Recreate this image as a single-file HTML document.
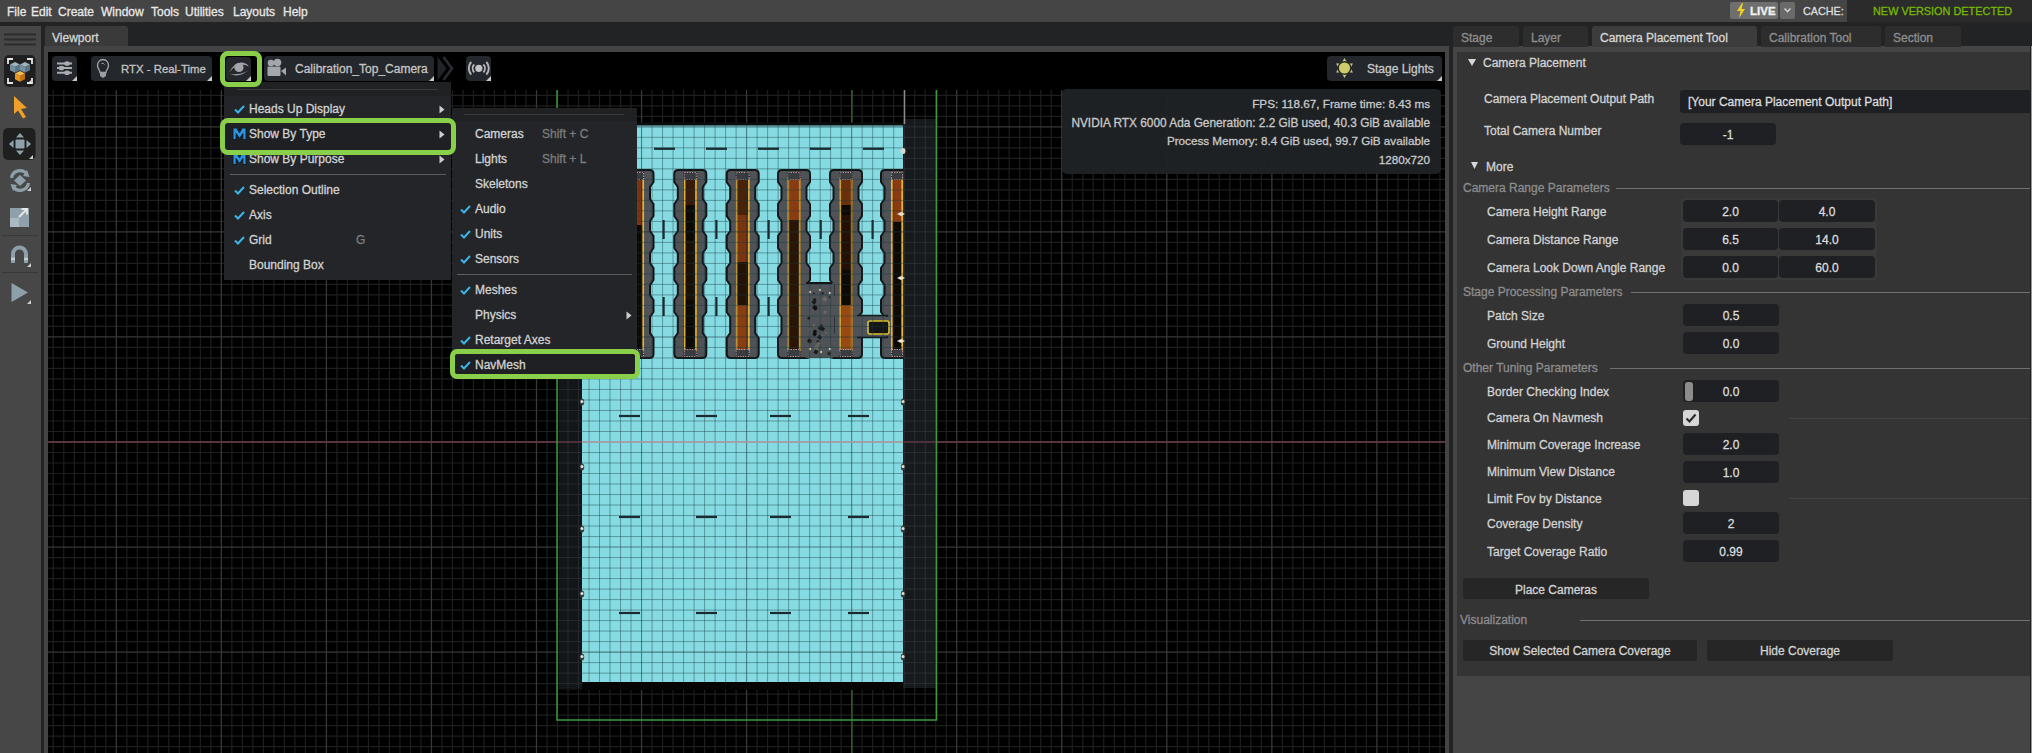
<!DOCTYPE html><html><head><meta charset="utf-8"><style>
*{margin:0;padding:0;box-sizing:border-box}
html,body{width:2032px;height:753px;overflow:hidden;background:#232323;font-family:"Liberation Sans",sans-serif;color:#d4d4d4}
.a{position:absolute}
.t{position:absolute;white-space:nowrap;line-height:12px;font-size:12px;-webkit-text-stroke-width:0.3px}
.lbl{color:#d2d2d2}
.hdr{color:#8c8c8c}
.fld{position:absolute;background:#1f2023;border-radius:4px;height:22px}
.fv{position:absolute;left:0;right:0;text-align:center;font-size:12px;line-height:12px;color:#dcdcdc;-webkit-text-stroke-width:0.3px}
.btn{position:absolute;background:#24272b;border-radius:4px}
.mi{position:absolute;font-size:12px;line-height:12px;color:#d2d2d2;white-space:nowrap;-webkit-text-stroke-width:0.3px}
.ck{position:absolute}
.tab{position:absolute;top:26px;height:21px;border-radius:3px 3px 0 0;background:#2e2e2e}
</style></head><body>
<div class="a" style="left:0;top:0;width:2032px;height:22px;background:#454545"></div>
<div class="t" style="left:7px;top:5.5px;color:#e8e8e8">File</div>
<div class="t" style="left:31px;top:5.5px;color:#e8e8e8">Edit</div>
<div class="t" style="left:58px;top:5.5px;color:#e8e8e8">Create</div>
<div class="t" style="left:101px;top:5.5px;color:#e8e8e8">Window</div>
<div class="t" style="left:151px;top:5.5px;color:#e8e8e8">Tools</div>
<div class="t" style="left:185px;top:5.5px;color:#e8e8e8">Utilities</div>
<div class="t" style="left:233px;top:5.5px;color:#e8e8e8">Layouts</div>
<div class="t" style="left:283px;top:5.5px;color:#e8e8e8">Help</div>
<div class="a" style="left:1730px;top:2px;width:48px;height:17px;background:#6f6f6f;border-radius:2px"></div>
<svg class="a" style="left:1736px;top:3px" width="10" height="15" viewBox="0 0 10 15"><path d="M6 0L1 8H4.5L3 15L9 6H5.5L7 0Z" fill="#f2d21e"/></svg>
<div class="t" style="left:1750px;top:5px;font-size:11.5px;font-weight:700;color:#f0f0f0">LIVE</div>
<div class="a" style="left:1780px;top:2px;width:15px;height:17px;background:#6a6a6a;border-radius:2px"></div>
<svg class="a" style="left:1783px;top:6px" width="9" height="8" viewBox="0 0 9 8"><path d="M1.5 2.5L4.5 5.5L7.5 2.5" stroke="#d0d0d0" stroke-width="1.6" fill="none"/></svg>
<div class="t" style="left:1803px;top:5px;font-size:10.8px;color:#dedede">CACHE:</div>
<div class="a" style="left:1847px;top:0;width:185px;height:22px;background:#2b2b2b"></div>
<div class="t" style="left:1873px;top:5px;font-size:10.9px;color:#76b900">NEW VERSION DETECTED</div>
<div class="a" style="left:0;top:22px;width:2032px;height:4px;background:#232323"></div>
<div class="a" style="left:0;top:26px;width:41px;height:727px;background:#474747"></div>
<div class="a" style="left:41px;top:26px;width:1412px;height:727px;background:#222324"></div>
<div class="a" style="left:45px;top:26px;width:83px;height:21px;background:#3a3a3a;border-radius:3px 3px 0 0"></div>
<div class="t" style="left:52px;top:32px;color:#d4d4d4">Viewport</div>
<div class="a" style="left:44px;top:46px;width:1405px;height:707px;background:#444444"></div>
<div class="a" style="left:48px;top:52px;width:1397px;height:701px;background:#000"></div>
<svg class="a" style="left:0;top:0" width="2032" height="753" viewBox="0 0 2032 753"><path d="M53.27 90V753M63.77 90V753M74.28 90V753M84.78 90V753M95.29 90V753M105.80 90V753M126.80 90V753M137.31 90V753M147.81 90V753M158.32 90V753M168.82 90V753M179.33 90V753M189.84 90V753M200.34 90V753M210.84 90V753M231.86 90V753M242.36 90V753M252.87 90V753M263.37 90V753M273.88 90V753M284.38 90V753M294.88 90V753M305.39 90V753M315.90 90V753M336.91 90V753M347.41 90V753M357.92 90V753M368.42 90V753M378.93 90V753M389.43 90V753M399.94 90V753M410.44 90V753M420.95 90V753M441.96 90V753M452.46 90V753M462.97 90V753M473.47 90V753M483.98 90V753M494.48 90V753M504.99 90V753M515.49 90V753M526.00 90V753M547.00 90V753M557.51 90V753M568.01 90V753M578.52 90V753M589.02 90V753M599.53 90V753M610.03 90V753M620.54 90V753M631.04 90V753M652.05 90V753M662.56 90V753M673.06 90V753M683.57 90V753M694.08 90V753M704.58 90V753M715.09 90V753M725.59 90V753M736.10 90V753M757.11 90V753M767.61 90V753M778.12 90V753M788.62 90V753M799.12 90V753M809.63 90V753M820.13 90V753M830.64 90V753M841.14 90V753M862.15 90V753M872.66 90V753M883.16 90V753M893.67 90V753M904.18 90V753M914.68 90V753M925.19 90V753M935.69 90V753M946.20 90V753M967.21 90V753M977.71 90V753M988.22 90V753M998.72 90V753M1009.23 90V753M1019.73 90V753M1030.24 90V753M1040.74 90V753M1051.25 90V753M1072.26 90V753M1082.76 90V753M1093.27 90V753M1103.77 90V753M1114.28 90V753M1124.78 90V753M1135.29 90V753M1145.79 90V753M1156.30 90V753M1177.31 90V753M1187.81 90V753M1198.32 90V753M1208.82 90V753M1219.33 90V753M1229.83 90V753M1240.34 90V753M1250.84 90V753M1261.35 90V753M1282.36 90V753M1292.86 90V753M1303.37 90V753M1313.87 90V753M1324.38 90V753M1334.88 90V753M1345.38 90V753M1355.89 90V753M1366.39 90V753M1387.40 90V753M1397.91 90V753M1408.41 90V753M1418.92 90V753M1429.42 90V753M1439.93 90V753M48 95.33H1445M48 105.84H1445M48 116.34H1445M48 137.35H1445M48 147.86H1445M48 158.36H1445M48 168.87H1445M48 179.38H1445M48 189.88H1445M48 200.38H1445M48 210.89H1445M48 221.39H1445M48 242.40H1445M48 252.91H1445M48 263.41H1445M48 273.92H1445M48 284.42H1445M48 294.93H1445M48 305.44H1445M48 315.94H1445M48 326.44H1445M48 347.45H1445M48 357.96H1445M48 368.46H1445M48 378.97H1445M48 389.48H1445M48 399.98H1445M48 410.49H1445M48 420.99H1445M48 431.50H1445M48 452.50H1445M48 463.01H1445M48 473.51H1445M48 484.02H1445M48 494.52H1445M48 505.03H1445M48 515.53H1445M48 526.04H1445M48 536.54H1445M48 557.56H1445M48 568.06H1445M48 578.57H1445M48 589.07H1445M48 599.58H1445M48 610.08H1445M48 620.59H1445M48 631.09H1445M48 641.60H1445M48 662.61H1445M48 673.11H1445M48 683.62H1445M48 694.12H1445M48 704.62H1445M48 715.13H1445M48 725.63H1445M48 736.14H1445M48 746.64H1445" stroke="#1e1e1e" stroke-width="1.2" fill="none"/><path d="M116.30 90V753M221.35 90V753M326.40 90V753M431.45 90V753M536.50 90V753M641.55 90V753M746.60 90V753M851.65 90V753M956.70 90V753M1061.75 90V753M1166.80 90V753M1271.85 90V753M1376.90 90V753M48 126.85H1445M48 231.90H1445M48 336.95H1445M48 442.00H1445M48 547.05H1445M48 652.10H1445" stroke="#383838" stroke-width="1.3" fill="none"/><path d="M48 442H1445" stroke="#6a3844" stroke-width="1.3"/><path d="M852 90V753" stroke="#2f5a2f" stroke-width="1.4"/></svg>
<svg class="a" style="left:0;top:0" width="2032" height="753" viewBox="0 0 2032 753"><defs><clipPath id="vp"><rect x="48" y="90" width="1397" height="663"/></clipPath></defs><g clip-path="url(#vp)"><rect x="571" y="122.5" width="332" height="4" fill="#0b0d0f"/><rect x="571" y="682" width="332" height="8" fill="#050505"/><rect x="558.5" y="122.5" width="23.5" height="567" fill="#131619"/><path d="M568.01 126V688M578.52 126V688M558.5 137.35H582M558.5 147.86H582M558.5 158.36H582M558.5 168.87H582M558.5 179.38H582M558.5 189.88H582M558.5 200.38H582M558.5 210.89H582M558.5 221.39H582M558.5 242.40H582M558.5 252.91H582M558.5 263.41H582M558.5 273.92H582M558.5 284.42H582M558.5 294.93H582M558.5 305.44H582M558.5 315.94H582M558.5 326.44H582M558.5 347.45H582M558.5 357.96H582M558.5 368.46H582M558.5 378.97H582M558.5 389.48H582M558.5 399.98H582M558.5 410.49H582M558.5 420.99H582M558.5 431.50H582M558.5 452.50H582M558.5 463.01H582M558.5 473.51H582M558.5 484.02H582M558.5 494.52H582M558.5 505.03H582M558.5 515.53H582M558.5 526.04H582M558.5 536.54H582M558.5 557.56H582M558.5 568.06H582M558.5 578.57H582M558.5 589.07H582M558.5 599.58H582M558.5 610.08H582M558.5 620.59H582M558.5 631.09H582M558.5 641.60H582M558.5 662.61H582M558.5 673.11H582M558.5 683.62H582M558.5 126.85H582M558.5 231.90H582M558.5 336.95H582M558.5 442.00H582M558.5 547.05H582M558.5 652.10H582" stroke="#262a2e" stroke-width="1" fill="none"/><rect x="582" y="125.5" width="321" height="556.5" fill="#86dbe3"/><path d="M625.5 170H649.5Q653.5 170 653.5 174L653.5 182.0L650.0 187.0L650.0 199.0L653.5 204.0L653.5 216.0L650.0 221.0L650.0 231.0L653.5 236.0L653.5 248.0L650.0 253.0L650.0 263.0L653.5 268.0L653.5 280.0L650.0 285.0L650.0 295.0L653.5 300.0L653.5 312.0L650.0 317.0L650.0 333.0L653.5 338.0L653.5 350.0L653.5 354Q653.5 358 649.5 358H625.5Q621.5 358 621.5 354L621.5 350.0L621.5 338.0L625.0 333.0L625.0 317.0L621.5 312.0L621.5 300.0L625.0 295.0L625.0 285.0L621.5 280.0L621.5 268.0L625.0 263.0L625.0 253.0L621.5 248.0L621.5 236.0L625.0 231.0L625.0 221.0L621.5 216.0L621.5 204.0L625.0 199.0L625.0 187.0L621.5 182.0L621.5 174Q621.5 170 625.5 170Z" fill="#4f5357" stroke="#121416" stroke-width="2"/><path d="M678.3 170H702.3Q706.3 170 706.3 174L706.3 182.0L702.8 187.0L702.8 199.0L706.3 204.0L706.3 216.0L702.8 221.0L702.8 231.0L706.3 236.0L706.3 248.0L702.8 253.0L702.8 263.0L706.3 268.0L706.3 280.0L702.8 285.0L702.8 295.0L706.3 300.0L706.3 312.0L702.8 317.0L702.8 333.0L706.3 338.0L706.3 350.0L706.3 354Q706.3 358 702.3 358H678.3Q674.3 358 674.3 354L674.3 350.0L674.3 338.0L677.8 333.0L677.8 317.0L674.3 312.0L674.3 300.0L677.8 295.0L677.8 285.0L674.3 280.0L674.3 268.0L677.8 263.0L677.8 253.0L674.3 248.0L674.3 236.0L677.8 231.0L677.8 221.0L674.3 216.0L674.3 204.0L677.8 199.0L677.8 187.0L674.3 182.0L674.3 174Q674.3 170 678.3 170Z" fill="#4f5357" stroke="#121416" stroke-width="2"/><path d="M730.7 170H754.7Q758.7 170 758.7 174L758.7 182.0L755.2 187.0L755.2 199.0L758.7 204.0L758.7 216.0L755.2 221.0L755.2 231.0L758.7 236.0L758.7 248.0L755.2 253.0L755.2 263.0L758.7 268.0L758.7 280.0L755.2 285.0L755.2 295.0L758.7 300.0L758.7 312.0L755.2 317.0L755.2 333.0L758.7 338.0L758.7 350.0L758.7 354Q758.7 358 754.7 358H730.7Q726.7 358 726.7 354L726.7 350.0L726.7 338.0L730.2 333.0L730.2 317.0L726.7 312.0L726.7 300.0L730.2 295.0L730.2 285.0L726.7 280.0L726.7 268.0L730.2 263.0L730.2 253.0L726.7 248.0L726.7 236.0L730.2 231.0L730.2 221.0L726.7 216.0L726.7 204.0L730.2 199.0L730.2 187.0L726.7 182.0L726.7 174Q726.7 170 730.7 170Z" fill="#4f5357" stroke="#121416" stroke-width="2"/><path d="M782.0 170H806.0Q810 170 810 174L810.0 182.0L806.5 187.0L806.5 199.0L810.0 204.0L810.0 216.0L806.5 221.0L806.5 231.0L810.0 236.0L810.0 248.0L806.5 253.0L806.5 263.0L810.0 268.0L810.0 280.0L806.5 285.0L806.5 295.0L810.0 300.0L810.0 312.0L806.5 317.0L806.5 333.0L810.0 338.0L810.0 350.0L810 354Q810 358 806 358H782.0Q778 358 778 354L778.0 350.0L778.0 338.0L781.5 333.0L781.5 317.0L778.0 312.0L778.0 300.0L781.5 295.0L781.5 285.0L778.0 280.0L778.0 268.0L781.5 263.0L781.5 253.0L778.0 248.0L778.0 236.0L781.5 231.0L781.5 221.0L778.0 216.0L778.0 204.0L781.5 199.0L781.5 187.0L778.0 182.0L778 174Q778 170 782 170Z" fill="#4f5357" stroke="#121416" stroke-width="2"/><path d="M834.0 170H858.0Q862 170 862 174L862.0 182.0L858.5 187.0L858.5 199.0L862.0 204.0L862.0 216.0L858.5 221.0L858.5 231.0L862.0 236.0L862.0 248.0L858.5 253.0L858.5 263.0L862.0 268.0L862.0 280.0L858.5 285.0L858.5 295.0L862.0 300.0L862.0 312.0L858.5 317.0L858.5 333.0L862.0 338.0L862.0 350.0L862 354Q862 358 858 358H834.0Q830 358 830 354L830.0 350.0L830.0 338.0L833.5 333.0L833.5 317.0L830.0 312.0L830.0 300.0L833.5 295.0L833.5 285.0L830.0 280.0L830.0 268.0L833.5 263.0L833.5 253.0L830.0 248.0L830.0 236.0L833.5 231.0L833.5 221.0L830.0 216.0L830.0 204.0L833.5 199.0L833.5 187.0L830.0 182.0L830 174Q830 170 834 170Z" fill="#4f5357" stroke="#121416" stroke-width="2"/><path d="M885.0 170H909.0Q913 170 913 174L913.0 182.0L909.5 187.0L909.5 199.0L913.0 204.0L913.0 216.0L909.5 221.0L909.5 231.0L913.0 236.0L913.0 248.0L909.5 253.0L909.5 263.0L913.0 268.0L913.0 280.0L909.5 285.0L909.5 295.0L913.0 300.0L913.0 312.0L909.5 317.0L909.5 333.0L913.0 338.0L913.0 350.0L913 354Q913 358 909 358H885.0Q881 358 881 354L881.0 350.0L881.0 338.0L884.5 333.0L884.5 317.0L881.0 312.0L881.0 300.0L884.5 295.0L884.5 285.0L881.0 280.0L881.0 268.0L884.5 263.0L884.5 253.0L881.0 248.0L881.0 236.0L884.5 231.0L884.5 221.0L881.0 216.0L881.0 204.0L884.5 199.0L884.5 187.0L881.0 182.0L881 174Q881 170 885 170Z" fill="#4f5357" stroke="#121416" stroke-width="2"/><path d="M804 283H834V356Q834 358 830 358H808Q804 358 804 355Z" fill="#4f5357"/><path d="M806 283H832" stroke="#121416" stroke-width="2"/><path d="M857 315.5H887V337.5H857" fill="#4f5357" stroke="#121416" stroke-width="1.6"/><rect x="858" y="317" width="30" height="19" fill="#4f5357"/><rect x="868" y="321" width="21" height="13" rx="2" fill="#151515" stroke="#d7c02a" stroke-width="1.6"/><rect x="813.7" y="323.7" width="2.4" height="2.4" fill="#6c6860" transform="rotate(35 813.7 323.7)"/><rect x="819.4" y="326.0" width="3.0" height="3.0" fill="#1a1a1a" transform="rotate(35 819.4 326.0)"/><rect x="814.2" y="304.5" width="4.0" height="4.0" fill="#1a1a1a" transform="rotate(35 814.2 304.5)"/><rect x="821.0" y="324.1" width="2.5" height="2.5" fill="#2a2622" transform="rotate(35 821.0 324.1)"/><rect x="813.6" y="299.4" width="3.8" height="3.8" fill="#1a1a1a" transform="rotate(35 813.6 299.4)"/><rect x="825.8" y="331.6" width="1.7" height="1.7" fill="#6c6860" transform="rotate(35 825.8 331.6)"/><rect x="809.0" y="338.4" width="3.6" height="3.6" fill="#101010" transform="rotate(35 809.0 338.4)"/><rect x="819.3" y="334.6" width="3.7" height="3.7" fill="#1a1a1a" transform="rotate(35 819.3 334.6)"/><rect x="817.5" y="339.7" width="2.6" height="2.6" fill="#2a2622" transform="rotate(35 817.5 339.7)"/><rect x="829.1" y="296.0" width="1.8" height="1.8" fill="#2a2622" transform="rotate(35 829.1 296.0)"/><rect x="814.2" y="331.7" width="3.4" height="3.4" fill="#101010" transform="rotate(35 814.2 331.7)"/><rect x="818.1" y="341.7" width="2.9" height="2.9" fill="#6c6860" transform="rotate(35 818.1 341.7)"/><rect x="822.0" y="326.2" width="3.8" height="3.8" fill="#1a1a1a" transform="rotate(35 822.0 326.2)"/><rect x="828.6" y="351.4" width="3.2" height="3.2" fill="#2a2622" transform="rotate(35 828.6 351.4)"/><rect x="824.8" y="310.2" width="2.9" height="2.9" fill="#6c6860" transform="rotate(35 824.8 310.2)"/><rect x="821.7" y="334.3" width="2.0" height="2.0" fill="#6c6860" transform="rotate(35 821.7 334.3)"/><rect x="814.4" y="297.7" width="2.7" height="2.7" fill="#1a1a1a" transform="rotate(35 814.4 297.7)"/><rect x="810.1" y="339.6" width="2.5" height="2.5" fill="#2a2622" transform="rotate(35 810.1 339.6)"/><rect x="808.5" y="316.5" width="2.5" height="2.5" fill="#1a1a1a" transform="rotate(35 808.5 316.5)"/><rect x="809.1" y="328.1" width="1.6" height="1.6" fill="#6c6860" transform="rotate(35 809.1 328.1)"/><rect x="815.9" y="344.6" width="4.0" height="4.0" fill="#6c6860" transform="rotate(35 815.9 344.6)"/><rect x="813.7" y="292.2" width="1.5" height="1.5" fill="#1a1a1a" transform="rotate(35 813.7 292.2)"/><rect x="822.4" y="291.9" width="2.0" height="2.0" fill="#1a1a1a" transform="rotate(35 822.4 291.9)"/><rect x="815.0" y="306.3" width="3.2" height="3.2" fill="#101010" transform="rotate(35 815.0 306.3)"/><rect x="815.5" y="349.4" width="3.7" height="3.7" fill="#1a1a1a" transform="rotate(35 815.5 349.4)"/><rect x="817.0" y="343.9" width="2.5" height="2.5" fill="#6c6860" transform="rotate(35 817.0 343.9)"/><rect x="824.3" y="296.4" width="3.9" height="3.9" fill="#6c6860" transform="rotate(35 824.3 296.4)"/><rect x="814.5" y="329.3" width="3.3" height="3.3" fill="#101010" transform="rotate(35 814.5 329.3)"/><circle cx="810" cy="292" r="1.2" fill="#d6c9a8"/><circle cx="820" cy="290" r="1.2" fill="#d6c9a8"/><circle cx="830" cy="293" r="1.2" fill="#d6c9a8"/><circle cx="810" cy="349" r="1.2" fill="#d6c9a8"/><circle cx="821" cy="352" r="1.2" fill="#d6c9a8"/><circle cx="830" cy="349" r="1.2" fill="#d6c9a8"/><rect x="631.0" y="172" width="13" height="185" fill="#0d0907"/><rect x="631.0" y="180" width="13" height="45" fill="#7a3510"/><rect x="631.0" y="225" width="13" height="132" fill="#0d0907"/><path d="M631.8 178V351M643.2 178V351" stroke="#e6b43a" stroke-width="1.7"/><rect x="631.5" y="172.5" width="12" height="7" fill="#3a3d40" stroke="#c9a0a8" stroke-width="0.9" stroke-dasharray="1.5 1"/><rect x="631.5" y="349.5" width="12" height="7" fill="#3a3d40" stroke="#c9a0a8" stroke-width="0.9" stroke-dasharray="1.5 1"/><rect x="683.8" y="172" width="13" height="185" fill="#0d0907"/><rect x="683.8" y="180" width="13" height="25" fill="#3a1a0a"/><rect x="683.8" y="205" width="13" height="35" fill="#0d0907"/><rect x="683.8" y="240" width="13" height="60" fill="#1a100a"/><rect x="683.8" y="300" width="13" height="57" fill="#0d0907"/><path d="M684.5999999999999 178V351M696.0 178V351" stroke="#e6b43a" stroke-width="1.7"/><rect x="684.3" y="172.5" width="12" height="7" fill="#3a3d40" stroke="#c9a0a8" stroke-width="0.9" stroke-dasharray="1.5 1"/><rect x="684.3" y="349.5" width="12" height="7" fill="#3a3d40" stroke="#c9a0a8" stroke-width="0.9" stroke-dasharray="1.5 1"/><rect x="735.7" y="172" width="14" height="185" fill="#0d0907"/><rect x="735.7" y="180" width="14" height="35" fill="#4a220a"/><rect x="735.7" y="215" width="14" height="47" fill="#7a3410"/><rect x="735.7" y="262" width="14" height="43" fill="#241208"/><rect x="735.7" y="305" width="14" height="50" fill="#8a3e12"/><path d="M736.5 178V351M748.9000000000001 178V351" stroke="#e6b43a" stroke-width="1.7"/><rect x="736.2" y="172.5" width="13" height="7" fill="#3a3d40" stroke="#c9a0a8" stroke-width="0.9" stroke-dasharray="1.5 1"/><rect x="736.2" y="349.5" width="13" height="7" fill="#3a3d40" stroke="#c9a0a8" stroke-width="0.9" stroke-dasharray="1.5 1"/><rect x="787.5" y="172" width="13" height="185" fill="#0d0907"/><rect x="787.5" y="178" width="13" height="42" fill="#8a3c10"/><rect x="787.5" y="220" width="13" height="137" fill="#2a1408"/><path d="M788.3 178V351M799.7 178V351" stroke="#e6b43a" stroke-width="1.7"/><rect x="788.0" y="172.5" width="12" height="7" fill="#3a3d40" stroke="#c9a0a8" stroke-width="0.9" stroke-dasharray="1.5 1"/><rect x="788.0" y="349.5" width="12" height="7" fill="#3a3d40" stroke="#c9a0a8" stroke-width="0.9" stroke-dasharray="1.5 1"/><rect x="839.5" y="172" width="13" height="185" fill="#0d0907"/><rect x="839.5" y="178" width="13" height="27" fill="#6a300e"/><rect x="839.5" y="205" width="13" height="10" fill="#0d0907"/><rect x="839.5" y="215" width="13" height="55" fill="#221008"/><rect x="839.5" y="270" width="13" height="35" fill="#0d0907"/><rect x="839.5" y="305" width="13" height="45" fill="#984a14"/><path d="M840.3 178V351M851.7 178V351" stroke="#e6b43a" stroke-width="1.7"/><rect x="840.0" y="172.5" width="12" height="7" fill="#3a3d40" stroke="#c9a0a8" stroke-width="0.9" stroke-dasharray="1.5 1"/><rect x="840.0" y="349.5" width="12" height="7" fill="#3a3d40" stroke="#c9a0a8" stroke-width="0.9" stroke-dasharray="1.5 1"/><rect x="891.0" y="172" width="12" height="185" fill="#0d0907"/><rect x="891.0" y="178" width="12" height="44" fill="#8a3c10"/><rect x="891.0" y="222" width="12" height="135" fill="#0d0907"/><path d="M891.8 178V351M902.2 178V351" stroke="#e6b43a" stroke-width="1.7"/><rect x="891.5" y="172.5" width="11" height="7" fill="#3a3d40" stroke="#c9a0a8" stroke-width="0.9" stroke-dasharray="1.5 1"/><rect x="891.5" y="349.5" width="11" height="7" fill="#3a3d40" stroke="#c9a0a8" stroke-width="0.9" stroke-dasharray="1.5 1"/><rect x="903.5" y="119" width="32.5" height="569" fill="#171a1d"/><path d="M904.18 119V688M914.68 119V688M925.19 119V688M935.69 119V688M903.5 137.35H936M903.5 147.86H936M903.5 158.36H936M903.5 168.87H936M903.5 179.38H936M903.5 189.88H936M903.5 200.38H936M903.5 210.89H936M903.5 221.39H936M903.5 242.40H936M903.5 252.91H936M903.5 263.41H936M903.5 273.92H936M903.5 284.42H936M903.5 294.93H936M903.5 305.44H936M903.5 315.94H936M903.5 326.44H936M903.5 347.45H936M903.5 357.96H936M903.5 368.46H936M903.5 378.97H936M903.5 389.48H936M903.5 399.98H936M903.5 410.49H936M903.5 420.99H936M903.5 431.50H936M903.5 452.50H936M903.5 463.01H936M903.5 473.51H936M903.5 484.02H936M903.5 494.52H936M903.5 505.03H936M903.5 515.53H936M903.5 526.04H936M903.5 536.54H936M903.5 557.56H936M903.5 568.06H936M903.5 578.57H936M903.5 589.07H936M903.5 599.58H936M903.5 610.08H936M903.5 620.59H936M903.5 631.09H936M903.5 641.60H936M903.5 662.61H936M903.5 673.11H936M903.5 683.62H936M903.5 126.85H936M903.5 231.90H936M903.5 336.95H936M903.5 442.00H936M903.5 547.05H936M903.5 652.10H936" stroke="#2a2e32" stroke-width="1" fill="none"/><path d="M901 212L905 214L901 216L897 214Z" fill="#e6e2da"/><path d="M901 276L905 278L901 280L897 278Z" fill="#e6e2da"/><path d="M901 339L905 341L901 343L897 341Z" fill="#e6e2da"/><rect x="654" y="147.6" width="21" height="2.3" fill="#1b2a30"/><rect x="706" y="147.6" width="21" height="2.3" fill="#1b2a30"/><rect x="758" y="147.6" width="21" height="2.3" fill="#1b2a30"/><rect x="810" y="147.6" width="21" height="2.3" fill="#1b2a30"/><rect x="863" y="147.6" width="21" height="2.3" fill="#1b2a30"/><rect x="662.5" y="220" width="2.2" height="19" fill="#1b2a30"/><rect x="715.3" y="220" width="2.2" height="19" fill="#1b2a30"/><rect x="767.5" y="220" width="2.2" height="19" fill="#1b2a30"/><rect x="819.6" y="220" width="2.2" height="19" fill="#1b2a30"/><rect x="871.5" y="220" width="2.2" height="19" fill="#1b2a30"/><rect x="662.5" y="297" width="2.2" height="19" fill="#1b2a30"/><rect x="715.3" y="297" width="2.2" height="19" fill="#1b2a30"/><rect x="767.5" y="297" width="2.2" height="19" fill="#1b2a30"/><rect x="619" y="414.9" width="21" height="2.2" fill="#1b2a30"/><rect x="696" y="414.9" width="21" height="2.2" fill="#1b2a30"/><rect x="770" y="414.9" width="21" height="2.2" fill="#1b2a30"/><rect x="848" y="414.9" width="21" height="2.2" fill="#1b2a30"/><rect x="619" y="515.9" width="21" height="2.2" fill="#1b2a30"/><rect x="696" y="515.9" width="21" height="2.2" fill="#1b2a30"/><rect x="770" y="515.9" width="21" height="2.2" fill="#1b2a30"/><rect x="848" y="515.9" width="21" height="2.2" fill="#1b2a30"/><rect x="619" y="611.9" width="21" height="2.2" fill="#1b2a30"/><rect x="696" y="611.9" width="21" height="2.2" fill="#1b2a30"/><rect x="770" y="611.9" width="21" height="2.2" fill="#1b2a30"/><rect x="848" y="611.9" width="21" height="2.2" fill="#1b2a30"/><ellipse cx="903" cy="402" rx="2.2" ry="3.5" fill="#3a3c3e"/><ellipse cx="903" cy="401.5" rx="1.5" ry="1.6" fill="#e0e0d8"/><ellipse cx="582" cy="402" rx="2.2" ry="3.5" fill="#3a3c3e"/><ellipse cx="582" cy="401.5" rx="1.5" ry="1.6" fill="#e0e0d8"/><ellipse cx="903" cy="467" rx="2.2" ry="3.5" fill="#3a3c3e"/><ellipse cx="903" cy="466.5" rx="1.5" ry="1.6" fill="#e0e0d8"/><ellipse cx="582" cy="467" rx="2.2" ry="3.5" fill="#3a3c3e"/><ellipse cx="582" cy="466.5" rx="1.5" ry="1.6" fill="#e0e0d8"/><ellipse cx="903" cy="529" rx="2.2" ry="3.5" fill="#3a3c3e"/><ellipse cx="903" cy="528.5" rx="1.5" ry="1.6" fill="#e0e0d8"/><ellipse cx="582" cy="529" rx="2.2" ry="3.5" fill="#3a3c3e"/><ellipse cx="582" cy="528.5" rx="1.5" ry="1.6" fill="#e0e0d8"/><ellipse cx="903" cy="594" rx="2.2" ry="3.5" fill="#3a3c3e"/><ellipse cx="903" cy="593.5" rx="1.5" ry="1.6" fill="#e0e0d8"/><ellipse cx="582" cy="594" rx="2.2" ry="3.5" fill="#3a3c3e"/><ellipse cx="582" cy="593.5" rx="1.5" ry="1.6" fill="#e0e0d8"/><ellipse cx="903" cy="657" rx="2.2" ry="3.5" fill="#3a3c3e"/><ellipse cx="903" cy="656.5" rx="1.5" ry="1.6" fill="#e0e0d8"/><ellipse cx="582" cy="657" rx="2.2" ry="3.5" fill="#3a3c3e"/><ellipse cx="582" cy="656.5" rx="1.5" ry="1.6" fill="#e0e0d8"/><ellipse cx="903" cy="151" rx="2.5" ry="3" fill="#d8d8d0"/><path d="M589.02 125.5V682M599.53 125.5V682M610.03 125.5V682M620.54 125.5V682M631.04 125.5V682M652.05 125.5V682M662.56 125.5V682M673.06 125.5V682M683.57 125.5V682M694.08 125.5V682M704.58 125.5V682M715.09 125.5V682M725.59 125.5V682M736.10 125.5V682M757.11 125.5V682M767.61 125.5V682M778.12 125.5V682M788.62 125.5V682M799.12 125.5V682M809.63 125.5V682M820.13 125.5V682M830.64 125.5V682M841.14 125.5V682M862.15 125.5V682M872.66 125.5V682M883.16 125.5V682M893.67 125.5V682M582 137.35H903M582 147.86H903M582 158.36H903M582 168.87H903M582 179.38H903M582 189.88H903M582 200.38H903M582 210.89H903M582 221.39H903M582 242.40H903M582 252.91H903M582 263.41H903M582 273.92H903M582 284.42H903M582 294.93H903M582 305.44H903M582 315.94H903M582 326.44H903M582 347.45H903M582 357.96H903M582 368.46H903M582 378.97H903M582 389.48H903M582 399.98H903M582 410.49H903M582 420.99H903M582 431.50H903M582 452.50H903M582 463.01H903M582 473.51H903M582 484.02H903M582 494.52H903M582 505.03H903M582 515.53H903M582 526.04H903M582 536.54H903M582 557.56H903M582 568.06H903M582 578.57H903M582 589.07H903M582 599.58H903M582 610.08H903M582 620.59H903M582 631.09H903M582 641.60H903M582 662.61H903M582 673.11H903" stroke="#1a3a40" stroke-opacity="0.5" stroke-width="0.85" fill="none"/><path d="M641.55 125.5V682M746.60 125.5V682M851.65 125.5V682M582 126.85H903M582 231.90H903M582 336.95H903M582 442.00H903M582 547.05H903M582 652.10H903" stroke="#1a3038" stroke-opacity="0.55" stroke-width="1.1" fill="none"/><path d="M582 442H903" stroke="#b2a0a8" stroke-width="1.4"/><path d="M558 442H582M903.5 442H936" stroke="#5a3440" stroke-width="1.3"/><path d="M904.5 90V124" stroke="#8a8a8a" stroke-width="1.5"/><path d="M557 60V720H936.5V60" stroke="#3a9a3c" stroke-width="1.5" fill="none"/></g></svg>
<div class="a" style="left:1449px;top:26px;width:583px;height:727px;background:#222324"></div>
<div class="a" style="left:1453px;top:46px;width:579px;height:707px;background:#454545"></div>
<div class="a" style="left:1457px;top:52px;width:574px;height:624px;background:#343434"></div>
<div class="tab" style="left:1453px;width:66px;background:#2d2d2d"></div>
<div class="t" style="left:1461px;top:32px;color:#8e8e8e">Stage</div>
<div class="tab" style="left:1523px;width:65px;background:#2d2d2d"></div>
<div class="t" style="left:1531px;top:32px;color:#8e8e8e">Layer</div>
<div class="tab" style="left:1592px;width:165px;background:#3c3c3c"></div>
<div class="t" style="left:1600px;top:32px;color:#d6d6d6">Camera Placement Tool</div>
<div class="tab" style="left:1761px;width:120px;background:#2d2d2d"></div>
<div class="t" style="left:1769px;top:32px;color:#8e8e8e">Calibration Tool</div>
<div class="tab" style="left:1885px;width:76px;background:#2d2d2d"></div>
<div class="t" style="left:1893px;top:32px;color:#8e8e8e">Section</div>
<svg class="a" style="left:1468px;top:59px" width="8" height="7"><path d="M0 0H8L4 7Z" fill="#d8d8d8"/></svg>
<div class="t lbl" style="left:1483px;top:57px">Camera Placement</div>
<div class="t lbl" style="left:1484px;top:93px">Camera Placement Output Path</div>
<div class="fld" style="left:1680px;top:90px;width:351px;height:23px;border-radius:3px 0 0 3px"><div class="fv" style="text-align:left;left:8px;top:6px">[Your Camera Placement Output Path]</div></div>
<div class="t lbl" style="left:1484px;top:125px">Total Camera Number</div>
<div class="fld" style="left:1680px;top:123px;width:96px;height:22px"><div class="fv" style="top:6px">-1</div></div>
<svg class="a" style="left:1471px;top:162px" width="7" height="7"><path d="M0 0H7L3.5 7Z" fill="#d8d8d8"/></svg>
<div class="t lbl" style="left:1486px;top:161px">More</div>
<div class="t hdr" style="left:1463px;top:182px">Camera Range Parameters</div>
<div class="a" style="left:1616px;top:188px;width:415px;height:1px;background:#707070"></div>
<div class="a" style="left:1681px;top:198px;width:196px;height:82px;background:#383938;border-radius:4px"></div>
<div class="t lbl" style="left:1487px;top:206px">Camera Height Range</div>
<div class="fld" style="left:1683px;top:200px;width:95px;height:22px"><div class="fv" style="top:6px">2.0</div></div>
<div class="fld" style="left:1779px;top:200px;width:96px;height:22px"><div class="fv" style="top:6px">4.0</div></div>
<div class="t lbl" style="left:1487px;top:234px">Camera Distance Range</div>
<div class="fld" style="left:1683px;top:228px;width:95px;height:22px"><div class="fv" style="top:6px">6.5</div></div>
<div class="fld" style="left:1779px;top:228px;width:96px;height:22px"><div class="fv" style="top:6px">14.0</div></div>
<div class="t lbl" style="left:1487px;top:262px">Camera Look Down Angle Range</div>
<div class="fld" style="left:1683px;top:256px;width:95px;height:22px"><div class="fv" style="top:6px">0.0</div></div>
<div class="fld" style="left:1779px;top:256px;width:96px;height:22px"><div class="fv" style="top:6px">60.0</div></div>
<div class="t hdr" style="left:1463px;top:286px">Stage Processing Parameters</div>
<div class="a" style="left:1631px;top:292px;width:400px;height:1px;background:#707070"></div>
<div class="t lbl" style="left:1487px;top:310px">Patch Size</div>
<div class="fld" style="left:1683px;top:304px;width:96px;height:22px"><div class="fv" style="top:6px">0.5</div></div>
<div class="t lbl" style="left:1487px;top:338px">Ground Height</div>
<div class="fld" style="left:1683px;top:332px;width:96px;height:22px"><div class="fv" style="top:6px">0.0</div></div>
<div class="t hdr" style="left:1463px;top:362px">Other Tuning Parameters</div>
<div class="a" style="left:1610px;top:368px;width:421px;height:1px;background:#707070"></div>
<div class="t lbl" style="left:1487px;top:386px">Border Checking Index</div>
<div class="fld" style="left:1683px;top:380px;width:96px;height:22px"><div class="fv" style="top:6px">0.0</div></div>
<div class="a" style="left:1685px;top:382px;width:8px;height:19px;background:#8c8c8c;border-radius:3px"></div>
<div class="t lbl" style="left:1487px;top:412px">Camera On Navmesh</div>
<div class="a" style="left:1683px;top:410px;width:16px;height:16px;background:#d6d6d6;border-radius:3px"></div>
<svg class="a" style="left:1683px;top:410px" width="16" height="16"><path d="M3.5 8.5L6.5 11.5L12.5 4.5" stroke="#2a2a2a" stroke-width="2.2" fill="none"/></svg>
<div class="a" style="left:1789px;top:418px;width:242px;height:1px;background:#434343"></div>
<div class="t lbl" style="left:1487px;top:439px">Minimum Coverage Increase</div>
<div class="fld" style="left:1683px;top:433px;width:96px;height:22px"><div class="fv" style="top:6px">2.0</div></div>
<div class="t lbl" style="left:1487px;top:466px">Minimum View Distance</div>
<div class="fld" style="left:1683px;top:461px;width:96px;height:22px"><div class="fv" style="top:6px">1.0</div></div>
<div class="t lbl" style="left:1487px;top:493px">Limit Fov by Distance</div>
<div class="a" style="left:1683px;top:490px;width:16px;height:16px;background:#d6d6d6;border-radius:3px"></div>
<div class="a" style="left:1789px;top:498px;width:242px;height:1px;background:#434343"></div>
<div class="t lbl" style="left:1487px;top:518px">Coverage Density</div>
<div class="fld" style="left:1683px;top:512px;width:96px;height:22px"><div class="fv" style="top:6px">2</div></div>
<div class="t lbl" style="left:1487px;top:546px">Target Coverage Ratio</div>
<div class="fld" style="left:1683px;top:540px;width:96px;height:22px"><div class="fv" style="top:6px">0.99</div></div>
<div class="a" style="left:1463px;top:578px;width:186px;height:21px;background:#262626;border-radius:2px"></div>
<div class="t lbl" style="left:1463px;width:186px;text-align:center;top:584px">Place Cameras</div>
<div class="t hdr" style="left:1460px;top:614px">Visualization</div>
<div class="a" style="left:1580px;top:620px;width:451px;height:1px;background:#707070"></div>
<div class="a" style="left:1463px;top:640px;width:234px;height:21px;background:#262626;border-radius:2px"></div>
<div class="t lbl" style="left:1463px;width:234px;text-align:center;top:645px">Show Selected Camera Coverage</div>
<div class="a" style="left:1707px;top:640px;width:186px;height:21px;background:#262626;border-radius:2px"></div>
<div class="t lbl" style="left:1707px;width:186px;text-align:center;top:645px">Hide Coverage</div>
<svg class="a" style="left:0;top:26px" width="41" height="300" viewBox="0 26 41 300"><path d="M4 34.5H36M4 39.5H36M4 44.5H36" stroke="#2c2c2c" stroke-width="2"/><rect x="4" y="55" width="31.5" height="32" rx="5" fill="#1f1f1f"/><path d="M8 64V59H13M27 59H32V64M8 78V83H13M27 83H32V78" stroke="#e6e6e6" stroke-width="1.8" fill="none"/><path d="M15 62L20 64.5L15 67.0L10 64.5Z" fill="#9db3bf"/><path d="M10 64.5L15 67.0V72.75L10 70.25Z" fill="#7590a0"/><path d="M20 64.5L15 67.0V72.75L20 70.25Z" fill="#5d7685"/><path d="M25 62L30 64.5L25 67.0L20 64.5Z" fill="#9db3bf"/><path d="M20 64.5L25 67.0V72.75L20 70.25Z" fill="#7590a0"/><path d="M30 64.5L25 67.0V72.75L30 70.25Z" fill="#5d7685"/><path d="M20 71L25 73.5L20 76.0L15 73.5Z" fill="#f6bb55"/><path d="M15 73.5L20 76.0V81.75L15 79.25Z" fill="#e8961e"/><path d="M25 73.5L20 76.0V81.75L25 79.25Z" fill="#c27412"/><path d="M31 80L33 78V82H29Z" fill="#cfcfcf"/><path d="M14 96L27 108L21 109L26 117L23 118.5L18 110.5L14 114Z" fill="#f0a028"/><rect x="3" y="128" width="32.5" height="32" rx="5" fill="#1f1f1f"/><path d="M20 133L16 137.5H24ZM20 155L16 150.5H24ZM9 144L13.5 140V148ZM31 144L26.5 140V148Z" fill="#8fa2ab"/><rect x="15.5" y="139.5" width="9" height="9" rx="1" fill="#8fa2ab"/><path d="M31 157L33 155V159H29Z" fill="#cfcfcf"/><path d="M11.5 178A8.5 8.5 0 0 1 27 174.5M28.5 183A8.5 8.5 0 0 1 13 186.5" stroke="#8d9fa8" stroke-width="3.2" fill="none"/><path d="M27 170L29.5 177L23 176ZM13 191L10.5 184L17 185Z" fill="#8d9fa8"/><path d="M14 180.5L20 175L26 180.5L20 186Z" fill="#8d9fa8"/><path d="M29 189L31 187V191H27Z" fill="#cfcfcf"/><rect x="10" y="208" width="19" height="19" fill="#8ea1aa"/><rect x="10" y="218" width="9" height="9" fill="#a9bac2"/><path d="M19 217L27 209M21.5 209H27V214.5" stroke="#e8e8e8" stroke-width="1.8" fill="none"/><path d="M2 235.5H38" stroke="#383838" stroke-width="1"/><path d="M13 263V254A6.5 6.5 0 0 1 26 254V263" stroke="#8d9fa8" stroke-width="4" fill="none"/><path d="M11 259H15M24 259H28" stroke="#c0cdd3" stroke-width="2.5"/><path d="M29 265L31 263V267H27Z" fill="#cfcfcf"/><path d="M2 272.5H38" stroke="#383838" stroke-width="1"/><path d="M11.5 283L28 292.5L11.5 302Z" fill="#8d9fa8"/><path d="M29 302L31 300V304H27Z" fill="#cfcfcf"/></svg>
<div class="btn" style="left:52px;top:56px;width:25px;height:25px"></div>
<svg class="a" style="left:72px;top:76px" width="5" height="5"><path d="M5 0V5H0Z" fill="#c8c8c8"/></svg>
<svg class="a" style="left:52px;top:56px" width="25" height="25"><path d="M5 7.5H20M5 12H20M5 16.8H20" stroke="#a9acb0" stroke-width="1.9"/><ellipse cx="15" cy="7.5" rx="2.8" ry="2.3" fill="#a9acb0"/><ellipse cx="9.5" cy="12" rx="2.8" ry="2.3" fill="#a9acb0"/><ellipse cx="15" cy="16.8" rx="2.8" ry="2.3" fill="#a9acb0"/></svg>
<div class="btn" style="left:91px;top:56px;width:121px;height:25px"></div>
<svg class="a" style="left:207px;top:76px" width="5" height="5"><path d="M5 0V5H0Z" fill="#c8c8c8"/></svg>
<svg class="a" style="left:94px;top:58px" width="18" height="21"><path d="M9 1.5A5.8 5.8 0 0 0 3.5 7.5C3.5 10.5 6 12 6 14.5H12C12 12 14.5 10.5 14.5 7.5A5.8 5.8 0 0 0 9 1.5Z" stroke="#9aa0a6" stroke-width="1.4" fill="none"/><path d="M6 15H12V18L9 20L6 18Z" fill="#9aa0a6"/><path d="M7.5 5.5A2.5 2.5 0 0 1 10.5 6.5" stroke="#9aa0a6" stroke-width="1" fill="none"/></svg>
<div class="t" style="left:121px;top:63px;color:#c4c4c4;font-size:11.4px">RTX - Real-Time</div>
<div class="btn" style="left:226px;top:57px;width:25px;height:24px"></div>
<svg class="a" style="left:246px;top:76px" width="5" height="5"><path d="M5 0V5H0Z" fill="#c8c8c8"/></svg>
<svg class="a" style="left:226px;top:57px" width="25" height="24"><path d="M3 15.5Q8 6 15 5.5Q20 5.5 23 9.5Q19 7.5 15 7.5Q9 8 3 15.5Z" fill="#a2a4a8"/><path d="M4 17Q13 21 22 13.5Q14 18.5 4 17Z" fill="#a2a4a8"/><circle cx="13" cy="10.5" r="4.6" fill="#a2a4a8"/></svg>
<div class="btn" style="left:264px;top:56px;width:170px;height:25px"></div>
<svg class="a" style="left:429px;top:76px" width="5" height="5"><path d="M5 0V5H0Z" fill="#c8c8c8"/></svg>
<svg class="a" style="left:266px;top:58px" width="22" height="20"><circle cx="5" cy="5" r="3.3" fill="#a4a7ab"/><circle cx="11.5" cy="4.5" r="3.8" fill="#a4a7ab"/><rect x="1.5" y="8.5" width="13" height="9.5" rx="1" fill="#a4a7ab"/><path d="M15 13L20 9.5V17.5Z" fill="#a4a7ab"/></svg>
<div class="t" style="left:295px;top:63px;color:#c4c4c4">Calibration_Top_Camera</div>
<svg class="a" style="left:436px;top:56px" width="18" height="25"><path d="M1.5 0.5L10.5 12.5L1.5 24.5Z" fill="#202327"/><path d="M7.5 1L16 12.5L7.5 24" stroke="#2a2d31" stroke-width="2.6" fill="none"/></svg>
<div class="btn" style="left:466px;top:56px;width:25px;height:25px"></div>
<svg class="a" style="left:486px;top:76px" width="5" height="5"><path d="M5 0V5H0Z" fill="#c8c8c8"/></svg>
<svg class="a" style="left:466px;top:56px" width="25" height="25"><circle cx="12.8" cy="12.3" r="3.6" fill="#c0c2c6"/><path d="M8.2 8.3A6 6 0 0 0 8.2 16.3M17.4 8.3A6 6 0 0 1 17.4 16.3M5.2 6A9.5 9.5 0 0 0 5.2 18.6M20.4 6A9.5 9.5 0 0 1 20.4 18.6" stroke="#b4b7bb" stroke-width="1.9" fill="none"/></svg>
<div class="btn" style="left:1327px;top:56px;width:115px;height:25px"></div>
<svg class="a" style="left:1437px;top:76px" width="5" height="5"><path d="M5 0V5H0Z" fill="#c8c8c8"/></svg>
<svg class="a" style="left:1334px;top:57px" width="21" height="22"><path d="M10.5 1L19 15.5H2Z" fill="#c3c592"/><path d="M10.5 21L19 6.5H2Z" fill="#c3c592"/><circle cx="10.5" cy="11" r="6.3" fill="#cbca6c" stroke="#2a2c1c" stroke-width="1.4"/></svg>
<div class="t" style="left:1367px;top:63px;color:#c8c8c8">Stage Lights</div>
<div class="a" style="left:1062px;top:89px;width:379px;height:85px;background:rgba(32,35,38,0.95);border-radius:5px"></div>
<div class="t" style="right:602px;top:98px;color:#c8c8c8;font-size:11.7px">FPS: 118.67, Frame time: 8.43 ms</div>
<div class="t" style="right:602px;top:117px;color:#c8c8c8;font-size:11.85px">NVIDIA RTX 6000 Ada Generation: 2.2 GiB used, 40.3 GiB available</div>
<div class="t" style="right:602px;top:135px;color:#c8c8c8;font-size:11.7px">Process Memory: 8.4 GiB used, 99.7 GiB available</div>
<div class="t" style="right:602px;top:154px;color:#c8c8c8;font-size:11.7px">1280x720</div>
<div class="a" style="left:224px;top:82px;width:227px;height:198px;background:#232528"></div>
<div class="a" style="left:224px;top:82px;width:227px;height:14px;background:#1f2123"></div>
<div class="a" style="left:237px;top:89px;width:201px;height:1px;background:#383a3d"></div>
<svg class="a" style="left:234px;top:105px" width="11" height="9" viewBox="0 0 11 9"><path d="M1 4.5L4 7.5L10 1" stroke="#3cb4ea" stroke-width="2" fill="none"/></svg>
<div class="mi" style="left:249px;top:103px;color:#d2d2d2">Heads Up Display</div>
<svg class="a" style="left:439px;top:105px" width="6" height="9" viewBox="0 0 6 9"><path d="M0.5 0.5L5.5 4.5L0.5 8.5Z" fill="#cccccc"/></svg>
<div class="a" style="left:224px;top:122px;width:228px;height:29px;background:#1e2023"></div>
<svg class="a" style="left:232px;top:127px" width="15" height="13" viewBox="0 0 15 13"><path d="M1 12.5V1H4.8L7.5 5.8L10.2 1H14V12.5H10.9V6.5L7.5 11.5L4.1 6.5V12.5Z" fill="#2f92dc" stroke="#0c1c2a" stroke-width="0.9"/></svg>
<div class="mi" style="left:249px;top:128px;color:#d2d2d2">Show By Type</div>
<svg class="a" style="left:439px;top:130px" width="6" height="9" viewBox="0 0 6 9"><path d="M0.5 0.5L5.5 4.5L0.5 8.5Z" fill="#cccccc"/></svg>
<svg class="a" style="left:232px;top:152px" width="15" height="13" viewBox="0 0 15 13"><path d="M1 12.5V1H4.8L7.5 5.8L10.2 1H14V12.5H10.9V6.5L7.5 11.5L4.1 6.5V12.5Z" fill="#2f92dc" stroke="#0c1c2a" stroke-width="0.9"/></svg>
<div class="mi" style="left:249px;top:153px;color:#d2d2d2">Show By Purpose</div>
<svg class="a" style="left:439px;top:155px" width="6" height="9" viewBox="0 0 6 9"><path d="M0.5 0.5L5.5 4.5L0.5 8.5Z" fill="#cccccc"/></svg>
<div class="a" style="left:230px;top:174px;width:216px;height:1px;background:#5c5e60"></div>
<svg class="a" style="left:234px;top:186px" width="11" height="9" viewBox="0 0 11 9"><path d="M1 4.5L4 7.5L10 1" stroke="#3cb4ea" stroke-width="2" fill="none"/></svg>
<div class="mi" style="left:249px;top:184px;color:#d2d2d2">Selection Outline</div>
<svg class="a" style="left:234px;top:211px" width="11" height="9" viewBox="0 0 11 9"><path d="M1 4.5L4 7.5L10 1" stroke="#3cb4ea" stroke-width="2" fill="none"/></svg>
<div class="mi" style="left:249px;top:209px;color:#d2d2d2">Axis</div>
<svg class="a" style="left:234px;top:236px" width="11" height="9" viewBox="0 0 11 9"><path d="M1 4.5L4 7.5L10 1" stroke="#3cb4ea" stroke-width="2" fill="none"/></svg>
<div class="mi" style="left:249px;top:234px;color:#d2d2d2">Grid</div>
<div class="mi" style="left:356px;top:234px;color:#7c7c7c">G</div>
<div class="mi" style="left:249px;top:259px;color:#d2d2d2">Bounding Box</div>
<div class="a" style="left:452px;top:108px;width:185px;height:270px;background:#232528"></div>
<div class="a" style="left:452px;top:108px;width:185px;height:13px;background:#1f2123"></div>
<div class="a" style="left:464px;top:114px;width:160px;height:1px;background:#383a3d"></div>
<div class="mi" style="left:475px;top:128px;color:#d2d2d2">Cameras</div>
<div class="mi" style="left:542px;top:128px;color:#7c7c7c">Shift + C</div>
<div class="mi" style="left:475px;top:153px;color:#d2d2d2">Lights</div>
<div class="mi" style="left:542px;top:153px;color:#7c7c7c">Shift + L</div>
<div class="mi" style="left:475px;top:178px;color:#d2d2d2">Skeletons</div>
<svg class="a" style="left:460px;top:205px" width="11" height="9" viewBox="0 0 11 9"><path d="M1 4.5L4 7.5L10 1" stroke="#3cb4ea" stroke-width="2" fill="none"/></svg>
<div class="mi" style="left:475px;top:203px;color:#d2d2d2">Audio</div>
<svg class="a" style="left:460px;top:230px" width="11" height="9" viewBox="0 0 11 9"><path d="M1 4.5L4 7.5L10 1" stroke="#3cb4ea" stroke-width="2" fill="none"/></svg>
<div class="mi" style="left:475px;top:228px;color:#d2d2d2">Units</div>
<svg class="a" style="left:460px;top:255px" width="11" height="9" viewBox="0 0 11 9"><path d="M1 4.5L4 7.5L10 1" stroke="#3cb4ea" stroke-width="2" fill="none"/></svg>
<div class="mi" style="left:475px;top:253px;color:#d2d2d2">Sensors</div>
<div class="a" style="left:457px;top:274px;width:175px;height:1px;background:#5c5e60"></div>
<svg class="a" style="left:460px;top:286px" width="11" height="9" viewBox="0 0 11 9"><path d="M1 4.5L4 7.5L10 1" stroke="#3cb4ea" stroke-width="2" fill="none"/></svg>
<div class="mi" style="left:475px;top:284px;color:#d2d2d2">Meshes</div>
<div class="mi" style="left:475px;top:309px;color:#d2d2d2">Physics</div>
<svg class="a" style="left:626px;top:311px" width="6" height="9" viewBox="0 0 6 9"><path d="M0.5 0.5L5.5 4.5L0.5 8.5Z" fill="#cccccc"/></svg>
<svg class="a" style="left:460px;top:336px" width="11" height="9" viewBox="0 0 11 9"><path d="M1 4.5L4 7.5L10 1" stroke="#3cb4ea" stroke-width="2" fill="none"/></svg>
<div class="mi" style="left:475px;top:334px;color:#d2d2d2">Retarget Axes</div>
<div class="a" style="left:454px;top:353px;width:182px;height:22px;background:#1e2023"></div>
<svg class="a" style="left:460px;top:361px" width="11" height="9" viewBox="0 0 11 9"><path d="M1 4.5L4 7.5L10 1" stroke="#3cb4ea" stroke-width="2" fill="none"/></svg>
<div class="mi" style="left:475px;top:359px;color:#d2d2d2">NavMesh</div>
<div class="a" style="left:220px;top:51px;width:42px;height:36px;border:5.5px solid #8acf4a;border-radius:8px"></div>
<div class="a" style="left:2030px;top:46px;width:1px;height:707px;background:#1e1e1e"></div>
<div class="a" style="left:2031px;top:46px;width:1px;height:707px;background:#9a9a9a"></div>
<div class="a" style="left:220px;top:118px;width:236px;height:37px;border:5.5px solid #8acf4a;border-radius:8px"></div>
<div class="a" style="left:450px;top:349px;width:190px;height:30px;border:5.5px solid #8acf4a;border-radius:7px"></div>
</body></html>
